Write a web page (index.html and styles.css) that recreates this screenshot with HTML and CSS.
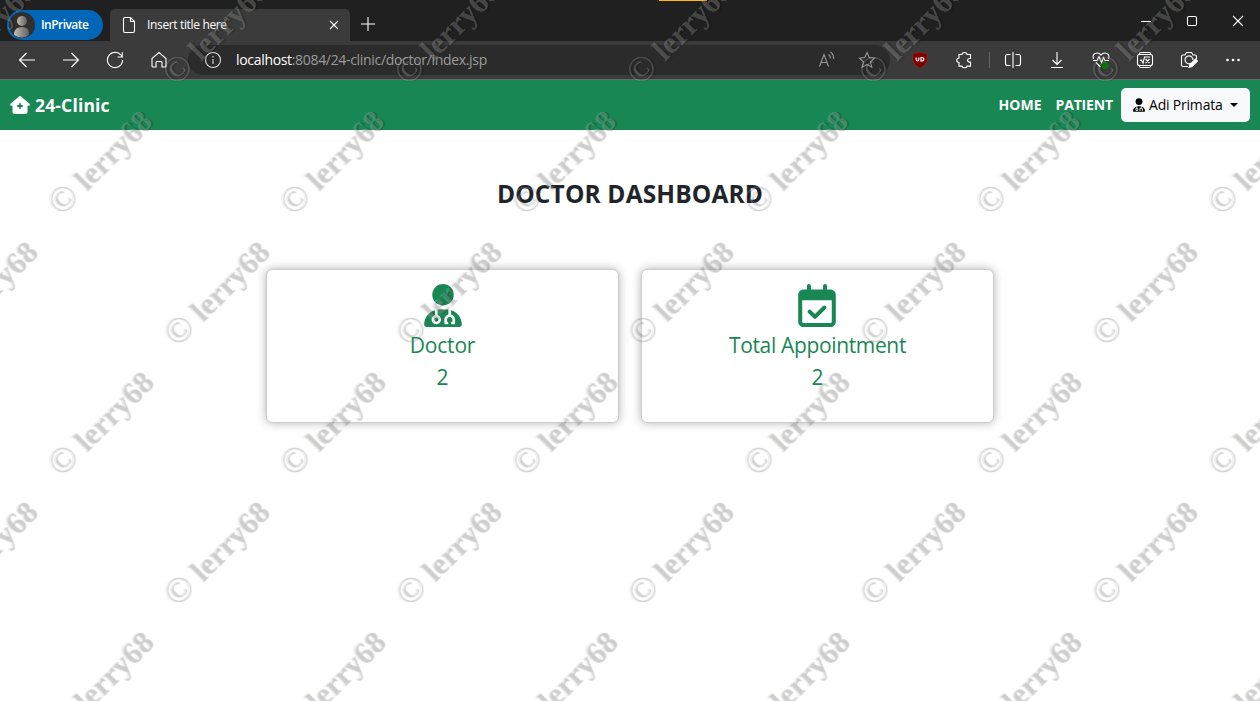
FILE: index.html
```html
<!DOCTYPE html>
<html lang="en">
<head>
<meta charset="utf-8">
<title>Insert title here</title>
<link rel="stylesheet" href="styles.css">
</head>
<body>
<div class="window">
  <header class="tabbar">
    <div class="profile">
      <svg class="avatar" viewBox="0 0 26 26"><defs><linearGradient id="av"><stop offset="0" stop-color="#c0bbb6"/><stop offset="1" stop-color="#615e5c"/></linearGradient></defs><circle cx="13" cy="13" r="13" fill="#302f2e"/><circle cx="13" cy="9" r="5" fill="url(#av)"/><path d="M5 23v-2q1-6 8-6t7 6v2q-7 5-15 0z" fill="url(#av)"/></svg>
      <span class="profile-name">InPrivate</span>
    </div>
    <div class="tab">
      <svg class="doc" viewBox="0 0 14 18"><path d="M3 1.500h5.500l4 4V15q0 1.500-1.500 1.500H3q-1.500 0-1.500-1.500V3q0-1.500 1.500-1.500zM8.500 1.500V5.500h4"/></svg>
      <span class="tab-title">Insert title here</span>
      <svg class="tab-x" viewBox="0 0 10 10"><path d="M1 1l8 8M9 1l-8 8"/></svg>
    </div>
    <svg class="plus" viewBox="0 0 14 14"><path d="M7 0v14M0 7h14"/></svg>
    <div class="accent"></div>
    <div class="controls">
      <svg viewBox="0 0 12 12"><path d="M1 6.500h10"/></svg>
      <svg viewBox="0 0 12 12"><rect x="1.500" y="1.500" width="9" height="9" rx="1.500"/></svg>
      <svg viewBox="0 0 12 12"><path d="M1 1l10 10M11 1L1 11"/></svg>
    </div>
  </header>
  <div class="toolbar">
    <div class="nav-icons">
      <svg viewBox="0 0 18 18"><path d="M17 9H1.500M8.500 2l-7 7 7 7"/></svg>
      <svg viewBox="0 0 18 18"><path d="M1 9h15.500M9.500 2l7 7-7 7"/></svg>
      <svg viewBox="0 0 18 18"><path d="M16 6A7.600 7.600 0 1 0 16.600 9M16.300 1.200V6h-4.800"/></svg>
      <svg viewBox="0 0 18 18"><path d="M2 7.500L9 1.500l7 6V15q0 1-1 1h-3v-4.500q0-1-1-1H7q-1 0-1 1V16H3q-1 0-1-1z"/></svg>
    </div>
    <div class="address">
      <svg class="info" viewBox="0 0 18 18"><circle cx="9" cy="9" r="7.500"/><path d="M9 8v5M9 5v1.500"/></svg>
      <span class="url"><b>localhost</b>:8084/24-clinic/doctor/index.jsp</span>
      <svg class="read" viewBox="0 0 18 18"><path d="M1.500 15.500L6 3.500l4.500 12M3 11.500h6M10.500 3.500q2 1.500 2 4M12.500 1q3.500 2.500 3 7"/></svg>
      <svg class="star" viewBox="0 0 18 18"><path d="M9 1.500l2.200 5 5.300.6-4 3.700 1.200 5.400L9 13.500l-4.700 2.700 1.200-5.400-4-3.700 5.300-.6z"/></svg>
    </div>
    <div class="tools">
      <svg viewBox="0 0 18 18"><path d="M9 1q3 1.700 7 1.500v7Q15 14.500 9 17 3 14.500 2 9.500v-7Q6 2.700 9 1z" fill="#800000" stroke="#a02020" stroke-width=".6"/><path d="M5.200 6.500v2q0 1.500 1.300 1.500t1.300-1.500v-2M10 6.500v3.500h.8q2 0 2-1.750t-2-1.750z" stroke-width="1.200"/></svg>
      <svg viewBox="0 0 18 18"><path d="M4 3.500h3q.2-2 2.500-2t2.500 2h3.500v4h-1q-2 .2-2 1.800t2 1.800h1v4H12q-.2 1.700-2.500 1.700T7 15.100H4v-3.600q-2.200-.2-2.200-2.300T4 7z"/></svg>
      <i class="rule"></i>
      <svg viewBox="0 0 18 18"><path d="M9 1v16M6.500 3.500h-3Q1.500 3.500 1.500 5.500v7q0 2 2 2h3M11.500 3.500h3q2 0 2 2v7q0 2-2 2h-3"/></svg>
      <svg viewBox="0 0 18 18"><path d="M9 1v12M4.500 9L9 13.500 13.500 9M3 16.500h12"/></svg>
      <svg viewBox="0 0 18 18"><path d="M1.500 8Q0 3 4 2.200 7 1.500 9 4q2-2.500 5-1.800Q18 3 16.500 8M1 9.500h4L7 5.500l2.500 6 2-5 1.500 3h4M4 11.500l4.500 4.500"/><circle cx="13" cy="14.500" r="3.700" fill="#0b750b" stroke="none"/></svg>
      <svg viewBox="0 0 18 18"><rect x="1.500" y="3.500" width="15" height="11" rx="2"/><path d="M3 3.500q.3-2 2-2h8q1.700 0 2 2M3 14.500q.3 2 2 2h8q1.700 0 2-2M4 9.500l1.200-.5L7 12l1.500-6H14M9.500 8l4 4M13.500 8l-4 4"/></svg>
      <svg viewBox="0 0 18 18"><path d="M8 15.500H3q-1.500 0-1.500-1.500V5.500Q1.500 4 3 4h2l1.500-2.500h5L13 4h2q1.500 0 1.500 1.500V8M11.500 12a4 4 0 1 1 1.500-3"/><path d="M9 16.500l1-3L15.500 8l2 2-5.500 5.500z" fill="#fff"/></svg>
      <svg viewBox="0 0 18 18"><g fill="#fff" stroke="none"><circle cx="3.500" cy="9" r="1.300"/><circle cx="9" cy="9" r="1.300"/><circle cx="14.500" cy="9" r="1.300"/></g></svg>
    </div>
  </div>
  <nav class="navbar">
    <svg class="house" viewBox="0 0 20 18"><path fill-rule="evenodd" d="M10 0q.6 0 1.100.5l8.400 7.300q.6.600.4 1.200t-1 .7H17.500V16q0 2-2 2h-11q-2 0-2-2V9.700H1.200q-.8 0-1-.7t.4-1.200L8.900.5Q9.400 0 10 0zM9.100 7.200v1.900H7.200v1.800h1.900v1.900h1.800v-1.900h1.900V9.100h-1.900V7.200z"/></svg>
    <span class="brand">24-Clinic</span>
    <span class="link home">HOME</span>
    <span class="link patient">PATIENT</span>
    <button class="user">
      <svg class="user-icon" viewBox="0 0 448 512"><path id="doctor" d="M224 256A128 128 0 1 0 224 0a128 128 0 1 0 0 256zm-96 55.2C54 332.9 0 401.3 0 482.3C0 498.7 13.3 512 29.700 512H418.300c16.400 0 29.700-13.300 29.700-29.700c0-81-54-149.400-128-171.100V362c27.600 7.100 48 32.200 48 62v40c0 8.800-7.200 16-16 16H336c-8.800 0-16-7.200-16-16s7.200-16 16-16V424c0-17.700-14.300-32-32-32s-32 14.300-32 32v24c8.800 0 16 7.200 16 16s-7.200 16-16 16H256c-8.800 0-16-7.200-16-16V424c0-29.800 20.400-54.900 48-62V304.900c-6-.6-12.100-.9-18.300-.9H178.300c-6.200 0-12.300 .3-18.300 .9v65.400c23.100 6.900 40 28.300 40 53.700c0 30.900-25.100 56-56 56s-56-25.100-56-56c0-25.400 16.900-46.800 40-53.700V311.200zM144 448a24 24 0 1 0 0-48 24 24 0 1 0 0 48z"/></svg>
      <span class="user-name">Adi Primata</span>
      <i class="caret"></i>
    </button>
  </nav>
  <main class="page">
    <h1 class="heading">DOCTOR DASHBOARD</h1>
    <div class="cards">
      <section class="card">
        <svg class="card-icon" viewBox="0 0 448 512"><use href="#doctor"/></svg>
        <span class="label doctor-label">Doctor</span>
        <span class="count">2</span>
      </section>
      <section class="card">
        <svg class="card-icon calendar" viewBox="0 0 448 512"><path d="M128 0c13.300 0 24 10.700 24 24V64H296V24c0-13.300 10.700-24 24-24s24 10.700 24 24V64h40c35.300 0 64 28.700 64 64v16 48V448c0 35.300-28.700 64-64 64H64c-35.300 0-64-28.700-64-64V192 144 128C0 92.700 28.700 64 64 64h40V24c0-13.300 10.700-24 24-24zM400 192H48V448c0 8.800 7.200 16 16 16H384c8.800 0 16-7.200 16-16V192zM329 297L217 409c-9.400 9.400-24.600 9.400-33.900 0l-64-64c-9.400-9.400-9.400-24.600 0-33.900s24.600-9.400 33.900 0l47 47 95-95c9.400-9.400 24.600-9.400 33.900 0s9.400 24.600 0 33.900z"/></svg>
        <span class="label total-label">Total Appointment</span>
        <span class="count">2</span>
      </section>
    </div>
  </main>
  <div class="marks">
    <div class="marks-row"><span>© lerry68</span><span>© lerry68</span><span>© lerry68</span><span>© lerry68</span><span>© lerry68</span><span>© lerry68</span></div>
    <div class="marks-row odd"><span>© lerry68</span><span>© lerry68</span><span>© lerry68</span><span>© lerry68</span><span>© lerry68</span><span>© lerry68</span></div>
    <div class="marks-row"><span>© lerry68</span><span>© lerry68</span><span>© lerry68</span><span>© lerry68</span><span>© lerry68</span><span>© lerry68</span></div>
    <div class="marks-row odd"><span>© lerry68</span><span>© lerry68</span><span>© lerry68</span><span>© lerry68</span><span>© lerry68</span><span>© lerry68</span></div>
    <div class="marks-row"><span>© lerry68</span><span>© lerry68</span><span>© lerry68</span><span>© lerry68</span><span>© lerry68</span><span>© lerry68</span></div>
    <div class="marks-row odd"><span>© lerry68</span><span>© lerry68</span><span>© lerry68</span><span>© lerry68</span><span>© lerry68</span><span>© lerry68</span></div>
  </div>
</div>
</body>
</html>
```

FILE: styles.css
```css
* { box-sizing: border-box; }
body { margin: 0; font-family: "Open Sans", "Noto Sans", sans-serif; background: #fff; }
svg { display: block; flex: none; }
.window { position: relative; width: 1260px; height: 701px; overflow: hidden; }
.tabbar { display: flex; height: 41px; background: #202020; color: #fff; position: relative; }
.tabbar svg:not(.avatar), .toolbar svg { fill: none; stroke: #fff; stroke-width: 1.1; }
.profile { display: flex; align-items: center; width: 96px; height: 30px; margin: 10px 0 0 7px; padding-left: 2px; border-radius: 15px; background: #0067b8; }
.avatar { width: 26px; height: 26px; }
.profile-name { margin: -1px 0 0 6px; font-size: 12px; font-weight: 600; letter-spacing: -.55px; white-space: nowrap; }
.tab { display: flex; align-items: center; width: 240px; height: 32px; margin: 9px 0 0 7px; padding-left: 12px; border-radius: 5px 5px 0 0; background: #3b3b3b; }
.doc { width: 14px; height: 18px; }
.tab-title { width: 180px; margin: -1px 0 0 11px; font-size: 12px; letter-spacing: -.35px; }
.tab-x { width: 10px; height: 10px; margin-left: 2px; }
.plus { width: 14px; height: 14px; margin: 17px 0 0 11px; }
.accent { position: absolute; left: 659px; top: 0; width: 48px; height: 1px; background: #ffb900; }
.controls { display: flex; gap: 34px; margin: 15px 16px 0 auto; }
.controls svg { width: 12px; height: 12px; }
.toolbar { display: flex; align-items: center; height: 39px; background: #3b3b3b; border-bottom: 1px solid #686868; }
.toolbar svg { width: 18px; height: 18px; }
.nav-icons { display: flex; gap: 26px; margin-left: 18px; }
.address { display: flex; align-items: center; width: 702px; height: 30px; margin-left: 20px; padding-left: 16px; border-radius: 15px; background: #2b2b2b; }
.url { width: 560px; margin: -1px 0 0 14px; font-size: 14px; letter-spacing: -.32px; color: #9b9b9b; }
.url b { font-weight: 400; color: #fff; }
.address .info { stroke: #ddd; }
.address .read, .address .star { stroke: #999; }
.address .read { margin-left: 22px; }
.address .star { margin-left: 22px; }
.tools { display: flex; align-items: center; margin-left: 21px; gap: 26px; }
.rule { width: 1px; height: 16px; margin: 0 -12px 0 -10px; background: #656565; }
.navbar { display: flex; align-items: center; height: 50px; padding: 0 10px; background: #198754; color: #fff; }
.house { width: 20px; height: 18px; fill: #fff; }
.brand { margin-left: 5px; font-size: 17.5px; font-weight: 700; letter-spacing: .15px; }
.link { margin-top: -1px; font-size: 14px; font-weight: 700; }
.home { margin-left: auto; letter-spacing: 0; }
.patient { margin-left: 14px; letter-spacing: -.15px; }
.user { display: flex; align-items: center; width: 129px; height: 34px; margin-left: 8px; padding: 0 12px; border: 0; border-radius: 5px; background: #f8f9fa; font-family: inherit; color: #000; }
.user-icon { width: 12px; height: 14px; }
.user-name { margin: -1px 0 0 4px; font-size: 14px; letter-spacing: -.2px; white-space: nowrap; }
.caret { margin-left: auto; border: 4px solid transparent; border-top-color: #000; border-bottom: 0; }
.page { display: flex; flex-direction: column; align-items: center; }
.heading { margin: 46px 0 0; font-size: 24.5px; line-height: 36px; font-weight: 700; letter-spacing: .14px; color: #212529; }
.cards { display: flex; gap: 22px; margin-top: 57px; }
.card { display: flex; flex-direction: column; align-items: center; width: 353px; height: 154px; padding-top: 14px; border: 1px solid #cbcbcb; border-radius: 6px; background: #fff; box-shadow: 0 0 10px rgba(0,0,0,.3); color: #198754; }
.card-icon { width: 38px; height: 43px; fill: #198754; }
.calendar { margin-right: 1px; }
.label, .count { font-size: 21px; line-height: 32px; white-space: nowrap; }
.label { margin-top: 2px; }
.doctor-label { letter-spacing: -.2px; }
.total-label { letter-spacing: -.35px; }
.marks { position: absolute; left: 0; top: 70px; }
.marks-row { display: flex; height: 130.3px; margin-left: -56px; }
.marks-row.odd { margin-left: 60px; }
.marks-row span { display: block; width: 232px; height: 0; flex: none; line-height: 0; font-family: "Liberation Serif", serif; font-weight: 700; font-size: 31px; text-indent: -12px; letter-spacing: .15px; white-space: nowrap; transform: rotate(-45deg); transform-origin: 0 0; color: rgba(200,200,200,.27); text-shadow: 1.500px 1.500px 1px rgba(0,0,0,.19); }
.marks-row span::first-letter { font-size: 36px; font-weight: 400; }
```
